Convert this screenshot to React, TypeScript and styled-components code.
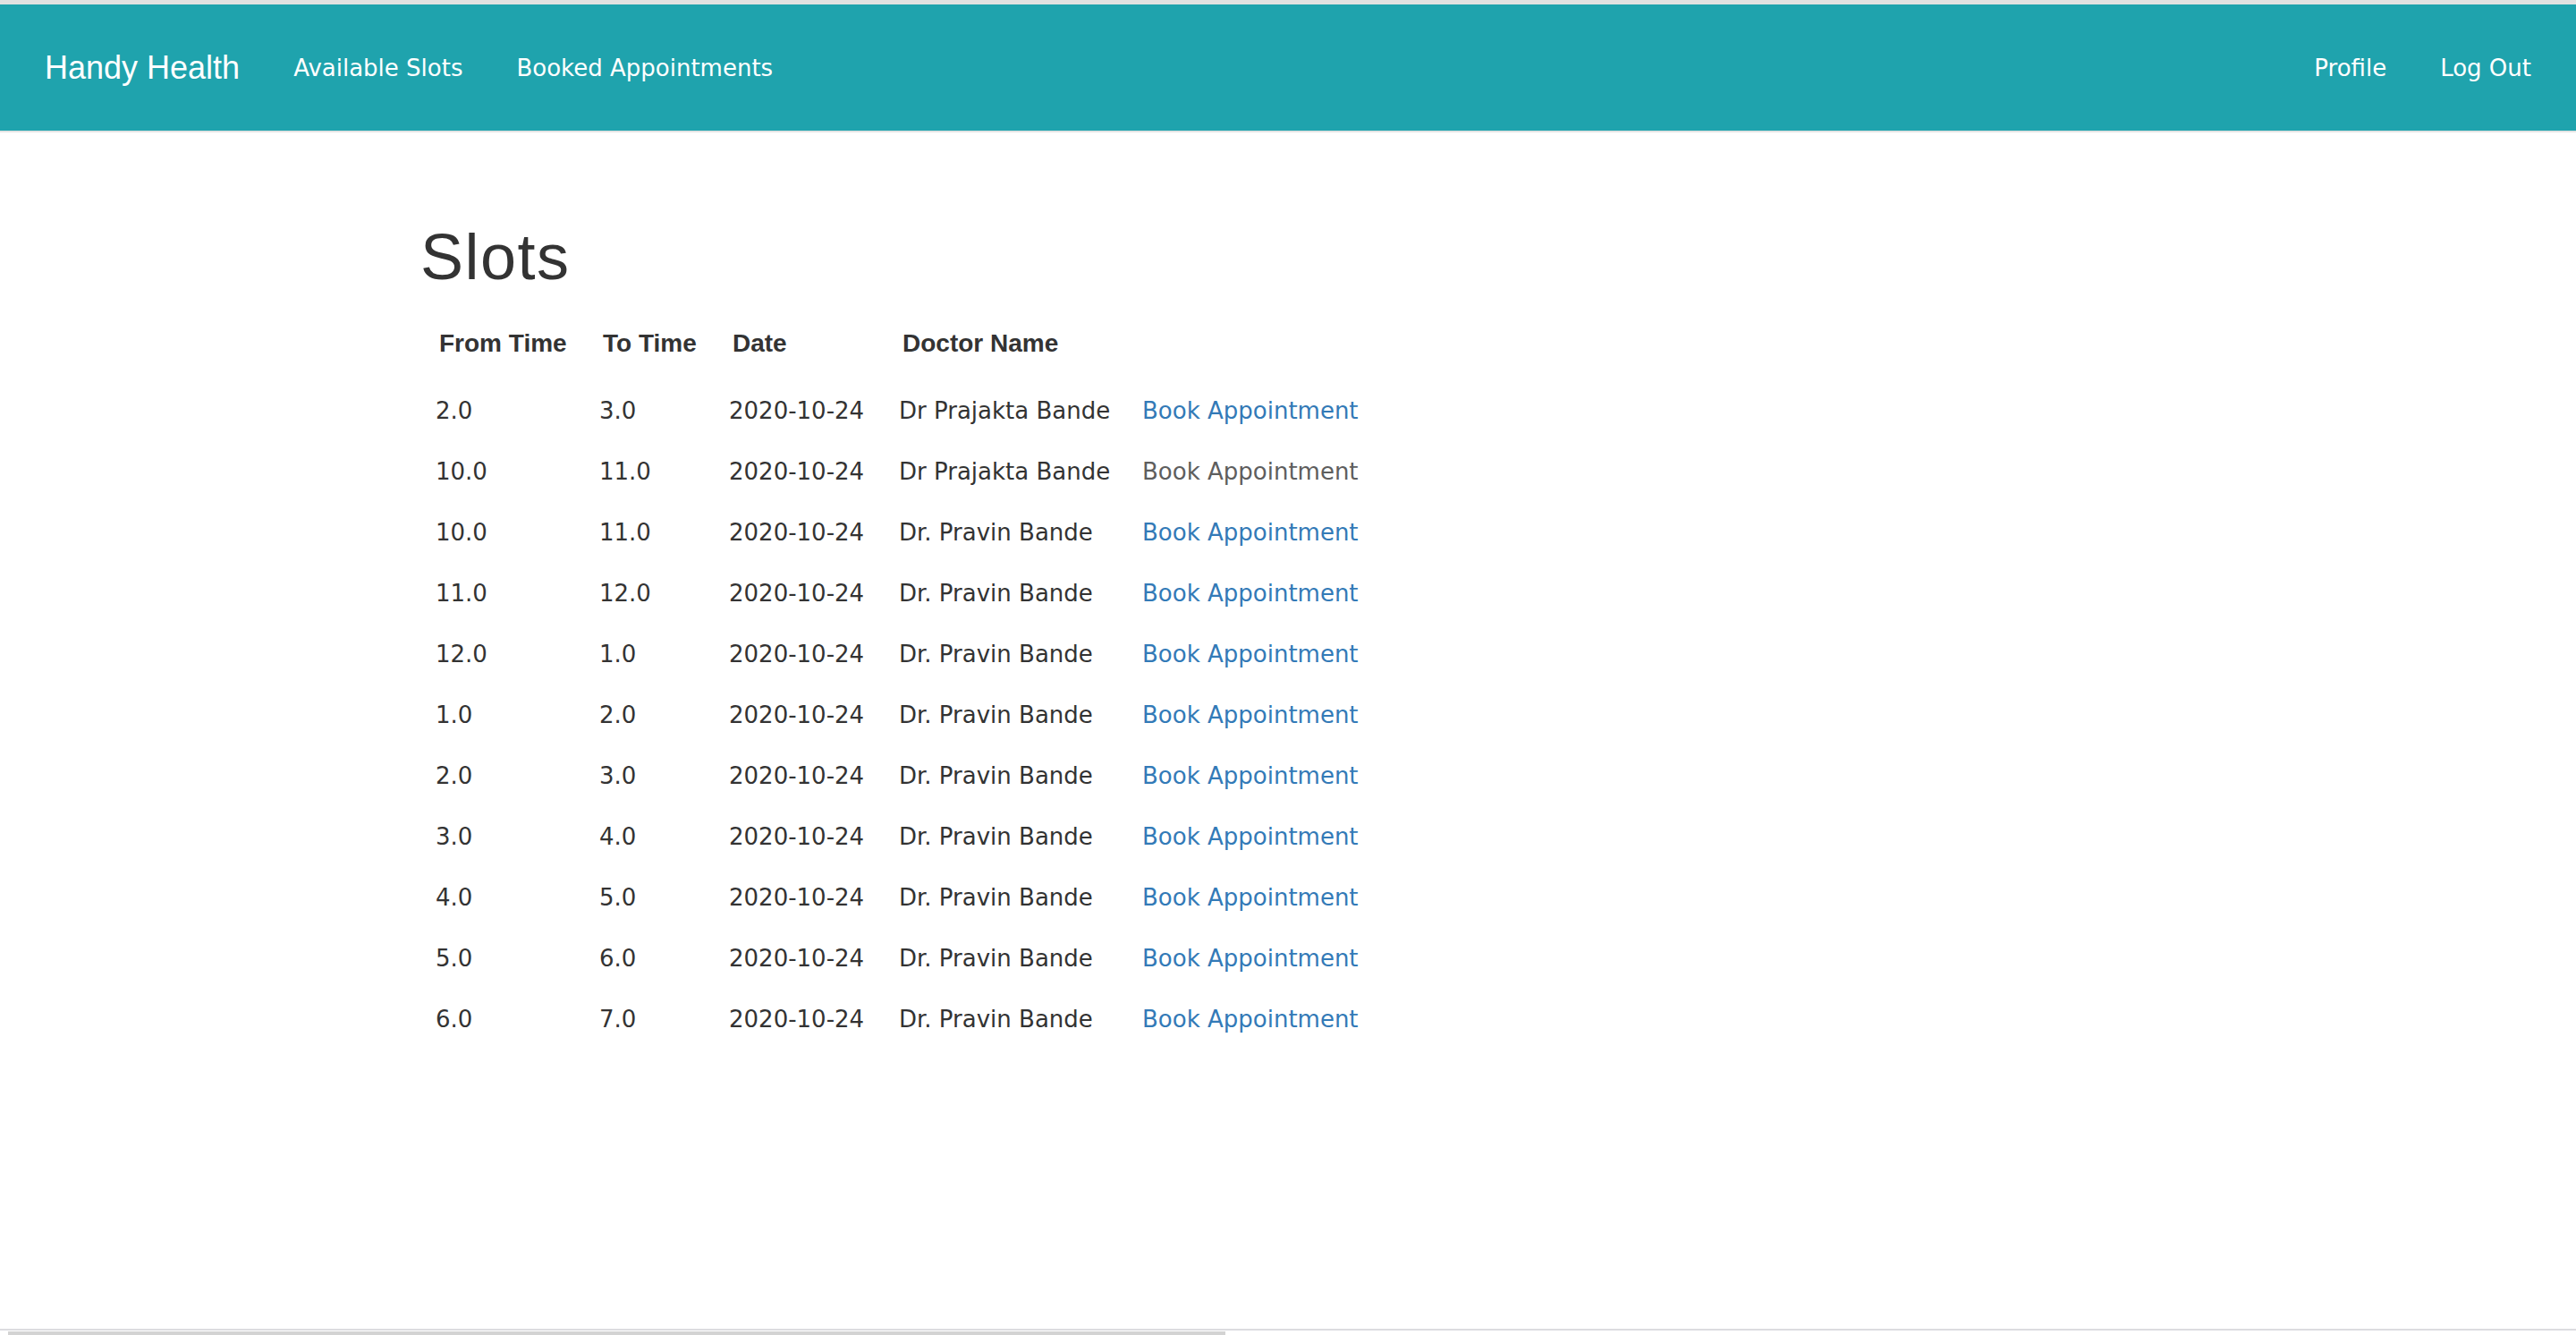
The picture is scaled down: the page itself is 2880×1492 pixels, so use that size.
import React from "react";
import styled, { createGlobalStyle } from "styled-components";

const GlobalStyle = createGlobalStyle`
  html, body {
    margin: 0;
    padding: 0;
    background: #fff;
  }
  body {
    font-family: "DejaVu Sans", Verdana, sans-serif;
    font-size: 26px;
    color: #333;
  }
`;

const Navbar = styled.nav`
  display: flex;
  align-items: center;
  justify-content: space-between;
  height: 141px;
  padding: 0 20px;
  background: #1fa3ad;
  border-top: 5px solid #e1e1e1;
  border-bottom: 2px solid #e4e4e4;
`;

const NavGroup = styled.div`
  display: flex;
  align-items: center;
`;

const Brand = styled.a`
  padding: 0 30px 0 30px;
  font-family: "Liberation Sans", Arial, sans-serif;
  font-size: 36px;
  color: #fff;
  text-decoration: none;
`;

const NavLink = styled.a`
  padding: 0 30px;
  font-size: 26px;
  color: #fff;
  text-decoration: none;
`;

const Container = styled.main`
  width: 1940px;
  margin: 0 auto;
`;

const Title = styled.h1`
  margin: 100px 0 17px;
  font-family: "Liberation Sans", Arial, sans-serif;
  font-size: 72px;
  font-weight: 500;
  letter-spacing: 1.5px;
  line-height: 79px;
  color: #333;
`;

const Table = styled.table`
  border-collapse: collapse;
  border-spacing: 0;
`;

const HeadCell = styled.th<{ $width?: number }>`
  width: ${({ $width }) => ($width ? `${$width - 21}px` : "auto")};
  padding: 20px 0 21px 21px;
  text-align: left;
  font-family: "Liberation Sans", Arial, sans-serif;
  font-size: 28px;
  font-weight: 700;
  line-height: 40px;
  color: #333;
`;

const Cell = styled.td`
  padding: 14px 0 14px 17px;
  font-size: 26px;
  line-height: 40px;
  white-space: nowrap;
  color: #333;
`;

const BookLink = styled.a<{ $muted?: boolean }>`
  color: ${({ $muted }) => ($muted ? "#5e5e5e" : "#337ab7")};
  text-decoration: none;
  cursor: pointer;
`;

const ScrollTrack = styled.div`
  position: fixed;
  left: 0;
  right: 0;
  bottom: 0;
  height: 5px;
  border-top: 2px solid #dcdce0;
  background: #fff;
`;

const ScrollThumb = styled.div`
  margin: 1px 0 0 9px;
  width: 1361px;
  height: 4px;
  background: #d3d3d3;
`;

type Slot = {
  from: string;
  to: string;
  date: string;
  doctor: string;
  muted?: boolean;
};

const slots: Slot[] = [
  { from: "2.0", to: "3.0", date: "2020-10-24", doctor: "Dr Prajakta Bande" },
  { from: "10.0", to: "11.0", date: "2020-10-24", doctor: "Dr Prajakta Bande", muted: true },
  { from: "10.0", to: "11.0", date: "2020-10-24", doctor: "Dr. Pravin Bande" },
  { from: "11.0", to: "12.0", date: "2020-10-24", doctor: "Dr. Pravin Bande" },
  { from: "12.0", to: "1.0", date: "2020-10-24", doctor: "Dr. Pravin Bande" },
  { from: "1.0", to: "2.0", date: "2020-10-24", doctor: "Dr. Pravin Bande" },
  { from: "2.0", to: "3.0", date: "2020-10-24", doctor: "Dr. Pravin Bande" },
  { from: "3.0", to: "4.0", date: "2020-10-24", doctor: "Dr. Pravin Bande" },
  { from: "4.0", to: "5.0", date: "2020-10-24", doctor: "Dr. Pravin Bande" },
  { from: "5.0", to: "6.0", date: "2020-10-24", doctor: "Dr. Pravin Bande" },
  { from: "6.0", to: "7.0", date: "2020-10-24", doctor: "Dr. Pravin Bande" },
];

const App: React.FC = () => {
  return (
    <>
      <GlobalStyle />
      <Navbar>
        <NavGroup>
          <Brand href="#">Handy Health</Brand>
          <NavLink href="#">Available Slots</NavLink>
          <NavLink href="#">Booked Appointments</NavLink>
        </NavGroup>
        <NavGroup>
          <NavLink href="#">Profile</NavLink>
          <NavLink href="#">Log Out</NavLink>
        </NavGroup>
      </Navbar>

      <Container>
        <Title>Slots</Title>
        <Table>
          <thead>
            <tr>
              <HeadCell $width={183}>From Time</HeadCell>
              <HeadCell $width={145}>To Time</HeadCell>
              <HeadCell $width={190}>Date</HeadCell>
              <HeadCell $width={272}>Doctor Name</HeadCell>
              <HeadCell />
            </tr>
          </thead>
          <tbody>
            {slots.map((slot, index) => (
              <tr key={index}>
                <Cell>{slot.from}</Cell>
                <Cell>{slot.to}</Cell>
                <Cell>{slot.date}</Cell>
                <Cell>{slot.doctor}</Cell>
                <Cell>
                  <BookLink $muted={slot.muted}>Book Appointment</BookLink>
                </Cell>
              </tr>
            ))}
          </tbody>
        </Table>
      </Container>

      <ScrollTrack>
        <ScrollThumb />
      </ScrollTrack>
    </>
  );
};

export default App;
